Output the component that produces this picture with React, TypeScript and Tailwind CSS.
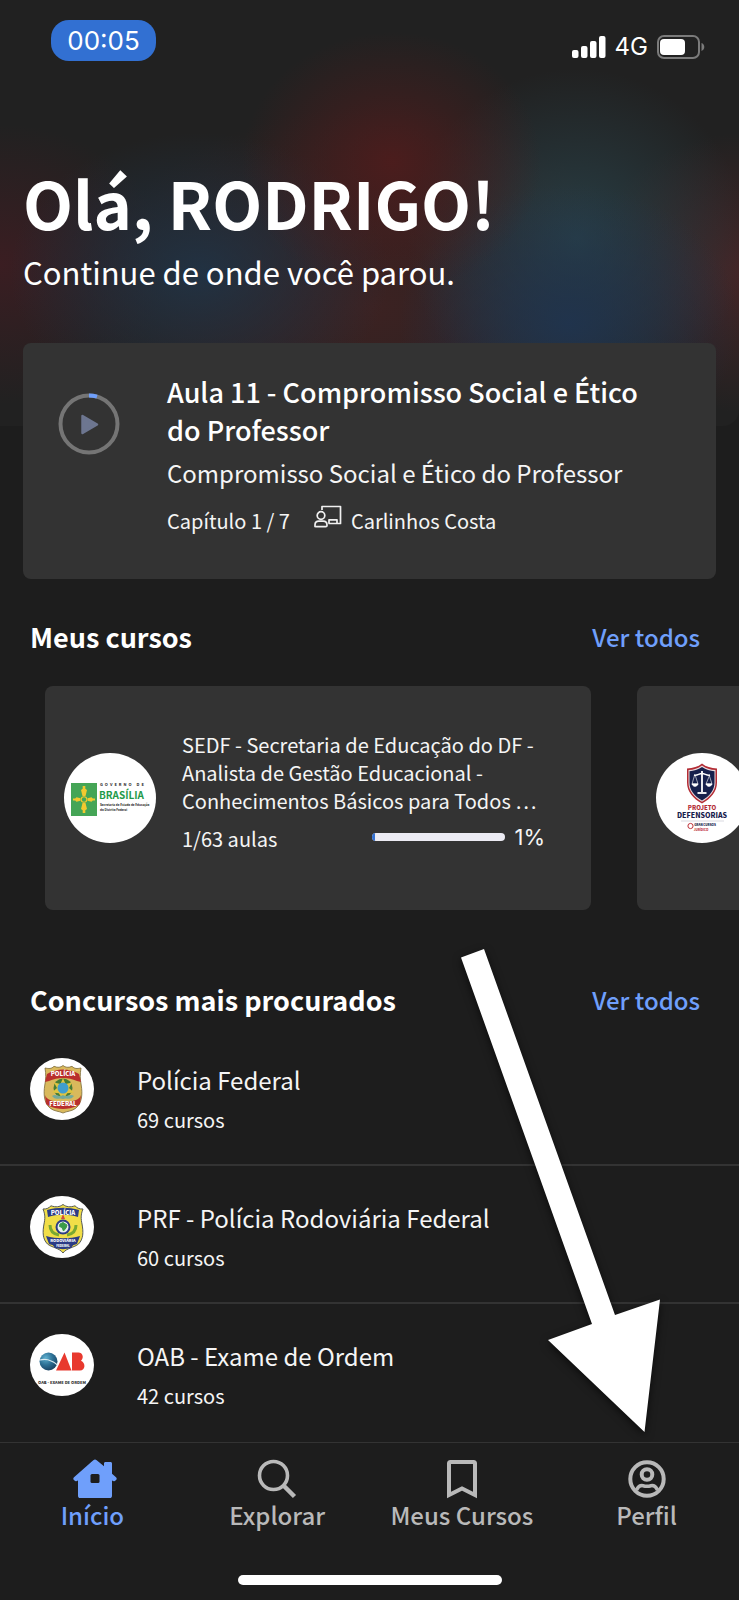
import type { ReactNode } from 'react';

type TabItem = {
  label: string;
  icon: ReactNode;
  active?: boolean;
};

type Contest = {
  name: string;
  courses: number;
  logo: ReactNode;
};

function SignalIcon() {
  return (
    <svg width="34" height="22" viewBox="0 0 34 22" fill="#fff" aria-hidden="true">
      <rect x="0" y="14" width="6.500" height="8" rx="2" />
      <rect x="9" y="10" width="6.500" height="12" rx="2" />
      <rect x="18" y="5" width="6.500" height="17" rx="2" />
      <rect x="27" y="0" width="6.500" height="22" rx="2" />
    </svg>
  );
}

function BatteryIcon() {
  return (
    <svg width="48" height="24" viewBox="0 0 48 24" aria-hidden="true">
      <rect x="1" y="1" width="41" height="22" rx="6" fill="none" stroke="#7b7b7b" strokeWidth="2" />
      <rect x="3" y="4" width="25" height="16" rx="4" fill="#fff" />
      <path d="M44.500 8c1.700.6 2.800 2.200 2.800 4s-1.100 3.400-2.800 4z" fill="#7b7b7b" />
    </svg>
  );
}

function PlayProgress() {
  return (
    <svg width="62" height="62" viewBox="0 0 62 62" aria-hidden="true">
      <circle cx="31" cy="31" r="28.500" fill="none" stroke="#757575" strokeWidth="4" />
      <path d="M31 2.500a28.500 28.500 0 0 1 8 1.150" fill="none" stroke="#6f9ffb" strokeWidth="4" />
      <path d="M24.500 23v17L39 31.500z" fill="#6d7690" stroke="#6d7690" strokeWidth="2.500" strokeLinejoin="round" />
    </svg>
  );
}

function TeacherIcon() {
  return (
    <svg
      width="28"
      height="24"
      viewBox="0 0 28 24"
      fill="none"
      stroke="#f0f0f0"
      strokeWidth="1.700"
      strokeLinejoin="round"
      aria-hidden="true"
    >
      <path d="M8 5V1.500h18.500v17H14.500" />
      <circle cx="7" cy="10.500" r="3.800" />
      <path d="M1 21.500V20c0-2.200 1.600-3.800 3.800-3.800h4.400c2.200 0 3.800 1.600 3.800 3.800v.5c0 .8-.5 1.200-1.200 1.200H2c-.6 0-1-.3-1-.8z" />
      <path d="M15 18.500v-3.700h8v3.700" />
    </svg>
  );
}

function HomeIcon() {
  return (
    <svg width="50" height="40" viewBox="-6 0 50 40" aria-hidden="true">
      <path
        d="M20.300 1.200a2.600 2.600 0 0 1 3.400 0L31 7.300V4.500C31 3.600 31.600 3 32.500 3h5c.9 0 1.500.6 1.500 1.500v10.200l4 3.600c.9.800.9 1.700.3 2.400l-.8.900c-.6.700-1.500.8-2.300.4l-1.200-.4v15.100c0 1.500-.8 2.300-2.300 2.300H7.300C5.800 39 5 38.200 5 36.700V21.600l-1.200.4c-.8.400-1.700.3-2.300-.4l-.8-.9c-.6-.7-.6-1.600.3-2.400z"
        fill="#6f9ffb"
      />
      <rect x="17.500" y="15" width="9" height="9" rx="1.500" fill="#1d1d1d" />
    </svg>
  );
}

function SearchIcon() {
  return (
    <svg width="40" height="40" viewBox="0 0 40 40" fill="none" stroke="currentColor" strokeWidth="3.600" aria-hidden="true">
      <circle cx="16.500" cy="16.500" r="14" />
      <path d="M26.500 26.500l11 11" strokeWidth="4.500" />
    </svg>
  );
}

function BookmarkIcon() {
  return (
    <svg width="32" height="40" viewBox="0 0 32 40" fill="none" stroke="currentColor" strokeWidth="4" aria-hidden="true">
      <path d="M3 36V4.500C3 3.500 3.500 3 4.500 3h23c1 0 1.500.5 1.500 1.500V36l-13-6.500z" />
    </svg>
  );
}

function ProfileIcon() {
  return (
    <svg width="40" height="40" viewBox="0 0 40 40" fill="none" stroke="currentColor" strokeWidth="4" aria-hidden="true">
      <circle cx="20" cy="20" r="16.700" />
      <circle cx="20" cy="15.500" r="5.300" />
      <path d="M9.500 31c1.500-3 4-4.800 6.500-4.300 2.800.8 5.200.8 8 0 2.500-.5 5 1.300 6.500 4.300" strokeWidth="3.500" />
    </svg>
  );
}

function BrasiliaLogo() {
  return (
    <svg className="shrink-0" width="92" height="90" viewBox="0 0 92 90" role="img" aria-label="Governo de Brasília">
      <ellipse cx="46" cy="45" rx="46" ry="45" fill="#fff" />
      <rect x="7" y="30" width="26" height="33" fill="#45a556" />
      <g fill="#f3c92f">
        <path d="M18.500 43l-1.500-6 1.700-1.300V33h2.600v2.700L23 37l-1.500 6z" />
        <path d="M18.500 50l-1.500 6 1.700 1.300V60h2.600v-2.700L23 56l-1.500-6z" />
        <path d="M16.500 45.300l-4-1-1.300 1.200H9v2h2.200l1.300 1.200 4-1z" />
        <path d="M23.500 45.300l4-1 1.300 1.200H31v2h-2.200l-1.300 1.200-4-1z" />
        <circle cx="20" cy="46.500" r="3.300" />
      </g>
      <circle cx="20" cy="46.500" r="2.200" fill="#45a556" />
      <g fontFamily="'Noto Sans CJK KR', sans-serif" fontWeight="700">
        <text x="36" y="33" fontSize="4" letterSpacing="2" fill="#222">GOVERNO DE</text>
        <text x="35" y="46" fontSize="10" fill="#1f9a49">BRASÍLIA</text>
      </g>
      <g fontFamily="'Noto Sans CJK KR', sans-serif" fontWeight="700" fontSize="3" fill="#222">
        <text x="36" y="53">Secretaria de Estado de Educação</text>
        <text x="36" y="58">do Distrito Federal</text>
      </g>
    </svg>
  );
}

function DefensoriasLogo() {
  return (
    <svg className="shrink-0" width="92" height="90" viewBox="0 0 92 90" role="img" aria-label="Projeto Defensorias">
      <ellipse cx="46" cy="45" rx="46" ry="45" fill="#fff" />
      <path d="M46 10.500c4 3.300 9 4.700 15 5v14c0 9-6 16-15 21-9-5-15-12-15-21v-14c6-.3 11-1.700 15-5z" fill="#b32d35" />
      <path d="M46 12.500c4 3 8.500 4.300 13.500 4.600v12.600c0 8-5.500 14.400-13.500 19-8-4.600-13.500-11-13.500-19V17.100c5-.3 9.500-1.600 13.500-4.600z" fill="#e9dadd" />
      <path d="M46 14c4 2.700 8 3.900 12.500 4.200v11.500c0 7.500-5 13.500-12.500 17.800-7.500-4.300-12.500-10.300-12.500-17.800V18.200C38 17.900 42 16.700 46 14z" fill="#16204c" />
      <g fill="none" stroke="#fff" strokeWidth="1">
        <path d="M46 18v21" strokeWidth="1.800" />
        <path d="M38 22c3 1 5-1.500 8-1.500s5 2.500 8 1.500" strokeWidth="1.500" />
        <path d="M41.500 40h9" strokeWidth="1.800" />
        <path d="M38.500 22.500L36 31h6l-2.700-8.500M53.500 22.500L50 31h6l-2.700-8.500" strokeWidth=".600" />
        <path d="M36 31c1 3 5 3 6 0zM50 31c1 3 5 3 6 0z" fill="#fff" />
      </g>
      <g fontFamily="'Noto Sans CJK KR', sans-serif" fontWeight="900" textAnchor="middle">
        <text x="46" y="57" fontSize="6" fill="#b32d35">PROJETO</text>
        <text x="46" y="65" fontSize="7" fill="#16204c">DEFENSORIAS</text>
        <text x="49" y="73" fontSize="3" fill="#16204c">GRAN CURSOS</text>
        <text x="45" y="78" fontSize="3" fill="#c0343c">JURÍDICO</text>
      </g>
      <path d="M25 68h43" stroke="#c9c9d3" strokeWidth=".700" />
      <circle cx="34.500" cy="73" r="2.600" fill="none" stroke="#c0343c" />
    </svg>
  );
}

function PoliciaFederalLogo() {
  return (
    <svg className="shrink-0" width="64" height="62" viewBox="0 0 64 62" role="img" aria-label="Polícia Federal">
      <ellipse cx="32" cy="31" rx="32" ry="31" fill="#fff" />
      <path
        d="M33 7.500c2.500 2 5 2.500 9 .8 2.500 2.600 5 2.500 9 1.700-1 6-1 11 .2 17 1.500 9 .8 18-5.200 23-4 3.500-9 3-13 5-4-2-9-1.500-13-5-6-5-6.700-14-5.200-23 1.200-6 1.200-11 .2-17 4 .8 6.500.9 9-1.700 4 1.700 6.500 1.200 9-.8z"
        fill="#d9b95c"
        stroke="#7a6a3a"
        strokeWidth=".800"
      />
      <path d="M17 16c10-6 22-6 32 0l2 8-4-1c-9-4-19-4-28 0l-4 1z" fill="#b92f2c" />
      <path d="M15 37c1 3 3 4 5 5 8 3 18 3 26 0 2-1 4-2 5-5l-1 9-3 2c-9 4-19 4-28 0l-3-2z" fill="#b92f2c" />
      <circle cx="33" cy="30" r="9.500" fill="#467c36" />
      <path d="M33 20l2.500 6 6.500-1.500-3 5.500 5 4.500-6.800.8L33 42l-4.200-6.700-6.800-.8 5-4.500-3-5.500 6.500 1.500z" fill="#dfc440" />
      <circle cx="33" cy="30" r="5.500" fill="#3f9ed0" />
      <path d="M22 38c4-3 7 2 11-1 4 3 7-2 11 1-4 5-7 1-11 3-4-2-7 2-11-3z" fill="#74aa9b" />
      <g fontFamily="'Noto Sans CJK KR', sans-serif" fontWeight="900" fontSize="6" textAnchor="middle" fill="#fff">
        <text x="33" y="18">POLÍCIA</text>
        <text x="33" y="48">FEDERAL</text>
      </g>
    </svg>
  );
}

function PrfLogo() {
  return (
    <svg className="shrink-0" width="64" height="62" viewBox="0 0 64 62" role="img" aria-label="Polícia Rodoviária Federal">
      <ellipse cx="32" cy="31" rx="32" ry="31" fill="#fff" />
      <path
        d="M33 8.500c3.500 2.500 7 3 12 1.300 2 2 4 3.500 8 3.200-2.500 6-2 10-1 15 1.500 8 1.500 15-3.500 20-4 3.500-12 4-15.500 9-3.500-5-11.500-5.500-15.500-9-5-5-5-12-3.500-20 1-5 1.500-9-1-15 4 .3 6-1.200 8-3.200 5 1.700 8.500 1.200 12-1.300z"
        fill="#f1de48"
        stroke="#555a58"
        strokeWidth="1"
      />
      <path d="M17 14c10-3 22-3 32 0l-1 7c-9-3-21-3-30 0z" fill="#2c3c85" />
      <path d="M16 40c10 3 24 3 34 0l-3 8c-8 3-20 3-28 0z" fill="#2c3c85" />
      <path d="M22 48c7 2.500 15 2.500 22 0l-3 4c-5 1.500-11 1.500-16 0z" fill="#2c3c85" />
      <path d="M20 29c0 5 3 9 9 10M46 29c0 5-3 9-9 10" fill="none" stroke="#79a832" strokeWidth="3" />
      <path d="M33 18l2 5h-4z" fill="#d44b3b" />
      <circle cx="33" cy="31" r="7.500" fill="#2c3c85" />
      <circle cx="33" cy="31" r="5.500" fill="#e8f1ef" />
      <path d="M30 28l3-1.500 4 2.500-1 3-2.500 3-1.500-3.500-2.500-1z" fill="#3a9c48" stroke="#3a9c48" />
      <g fontFamily="'Noto Sans CJK KR', sans-serif" fontWeight="900" textAnchor="middle" fill="#fff">
        <text x="33" y="19" fontSize="6">POLÍCIA</text>
        <text x="33" y="46" fontSize="4">RODOVIÁRIA</text>
        <text x="33" y="51" fontSize="3">FEDERAL</text>
      </g>
    </svg>
  );
}

function OabLogo() {
  return (
    <svg className="shrink-0" width="64" height="62" viewBox="0 0 64 62" role="img" aria-label="OAB">
      <defs>
        <radialGradient id="oab-globe" cx=".35" cy=".3" r=".8">
          <stop offset="0" stopColor="#5fb0cf" />
          <stop offset=".5" stopColor="#2c6f94" />
          <stop offset="1" stopColor="#173a59" />
        </radialGradient>
      </defs>
      <ellipse cx="32" cy="31" rx="32" ry="31" fill="#fff" />
      <circle cx="18.500" cy="27.500" r="9" fill="url(#oab-globe)" />
      <path d="M10 26c5-1.500 12 0 17.500 5" fill="none" stroke="#dcecf2" strokeWidth="1.200" />
      <path d="M34.500 18.500l7 18H26z" fill="#e8392e" />
      <path d="M42 18.500h6.500c4 0 6 5 2.500 8.200 5 2 4.500 9.800-1 9.800H42z" fill="#e8392e" />
      <text
        x="32"
        y="50"
        fontFamily="'Noto Sans CJK KR', sans-serif"
        fontWeight="900"
        fontSize="4"
        textAnchor="middle"
        fill="#333"
      >
        OAB - EXAME DE ORDEM
      </text>
    </svg>
  );
}

const CONTESTS: Contest[] = [
  { name: 'Polícia Federal', courses: 69, logo: <PoliciaFederalLogo /> },
  { name: 'PRF - Polícia Rodoviária Federal', courses: 60, logo: <PrfLogo /> },
  { name: 'OAB - Exame de Ordem', courses: 42, logo: <OabLogo /> },
];

const TABS: TabItem[] = [
  { label: 'Início', icon: <HomeIcon />, active: true },
  { label: 'Explorar', icon: <SearchIcon /> },
  { label: 'Meus Cursos', icon: <BookmarkIcon /> },
  { label: 'Perfil', icon: <ProfileIcon /> },
];

function StatusBar() {
  return (
    <div className="flex items-start justify-between pt-5 pr-[34px] pl-[51px] font-[Inter,sans-serif] text-white">
      <span className="flex h-[41px] w-[105px] items-center justify-center rounded-[18px] bg-[#3270d2] text-[26px]">
        00:05
      </span>
      <div className="flex h-[54px] items-center gap-[9px] text-[24px]">
        <SignalIcon />
        <span>4G</span>
        <BatteryIcon />
      </div>
    </div>
  );
}

function SectionHeader({ title }: { title: string }) {
  return (
    <div className="flex items-center justify-between pr-[39px] pl-[30px] leading-10">
      <h2 className="text-[27px] font-bold text-white">{title}</h2>
      <a href="#" className="text-[24px] font-medium text-[#6f9ffb]">
        Ver todos
      </a>
    </div>
  );
}

export default function App() {
  return (
    <div className="relative flex min-h-screen flex-col overflow-hidden bg-[#1d1d1d] font-['Noto_Sans_CJK_KR',sans-serif] text-[#f5f5f5]">
      {/* Blurred hero background */}
      <div className="absolute inset-x-0 top-0 h-[426px] rounded-br-2xl bg-[#212121] bg-[radial-gradient(ellipse_150px_130px_at_53%_38%,#501c1ce0,#501c1c70_50%,transparent),radial-gradient(ellipse_170px_140px_at_77%_76%,#1f3450e0,#1f345070_50%,transparent),radial-gradient(ellipse_170px_170px_at_78%_56%,#29424ae0,#29424a70_50%,transparent),radial-gradient(ellipse_190px_140px_at_27%_64%,#203447e0,#20344770_50%,transparent),radial-gradient(ellipse_160px_140px_at_101%_64%,#4a2628e0,#4a262870_50%,transparent),radial-gradient(ellipse_170px_140px_at_0%_62%,#3e1d22e0,#3e1d2270_50%,transparent),radial-gradient(ellipse_280px_200px_at_50%_72%,#402222e0,#40222270_50%,transparent)]" />

      <div className="relative flex grow flex-col">
        <StatusBar />

        <header className="px-[23px] pt-[88px] text-white">
          <h1 className="text-[65px] leading-[80px] font-bold">Olá, RODRIGO!</h1>
          <p className="mt-[6px] text-[31px] leading-[48px]">Continue de onde você parou.</p>
        </header>

        <main>
          {/* Last lesson */}
          <article className="mx-[23px] mt-[47px] flex rounded-lg bg-[#333] pt-[30px] pr-12 pb-10 pl-[35px]">
            <button type="button" aria-label="Continuar aula" className="mt-5 h-[62px] shrink-0">
              <PlayProgress />
            </button>
            <div className="ml-[47px] min-w-0">
              <h2 className="text-[27px] leading-[38px] font-medium text-white">
                Aula 11 - Compromisso Social e Ético do Professor
              </h2>
              <p className="mt-1 text-[24px] leading-10">Compromisso Social e Ético do Professor</p>
              <div className="mt-[10px] flex items-center text-[20px] leading-9">
                <span>Capítulo 1 / 7</span>
                <span className="mr-[9px] mb-2 ml-6">
                  <TeacherIcon />
                </span>
                <span>Carlinhos Costa</span>
              </div>
            </div>
          </article>

          <section className="pt-[38px]">
            <SectionHeader title="Meus cursos" />
            <div className="mt-[29px] flex gap-[46px] overflow-hidden pl-[45px]">
              <article className="flex h-[224px] w-[546px] shrink-0 items-center rounded-lg bg-[#333] pr-[46px] pl-[19px]">
                <BrasiliaLogo />
                <div className="ml-[26px] min-w-0 grow pb-[6px] text-[20px]">
                  <h3 className="leading-7">
                    SEDF - Secretaria de Educação do DF - Analista de Gestão Educacional - Conhecimentos Básicos para Todos …
                  </h3>
                  <div className="mt-1 flex items-center leading-9">
                    <span className="grow">1/63 aulas</span>
                    <div className="flex items-center pb-1">
                      <div className="h-2 w-[133px] overflow-hidden rounded-full bg-[#ecebf3]">
                        <div className="h-full min-w-[3px] bg-[#3270d2]" style={{ width: '1%' }} />
                      </div>
                      <span className="w-10 text-right font-[Inter,sans-serif] text-[22px]">1%</span>
                    </div>
                  </div>
                </div>
              </article>
              <article className="flex h-[224px] w-[546px] shrink-0 items-center rounded-lg bg-[#333] pl-[19px]">
                <DefensoriasLogo />
              </article>
            </div>
          </section>

          <section className="pt-[70px]">
            <SectionHeader title="Concursos mais procurados" />
            <ul className="mt-2 divide-y-2 divide-[#333]">
              {CONTESTS.map((c) => (
                <li key={c.name}>
                  <a href="#" className="flex h-[136px] items-start pt-[30px] pl-[30px]">
                    {c.logo}
                    <span className="ml-[43px] flex flex-col gap-[6px] pt-1">
                      <span className="text-[24px] leading-9">{c.name}</span>
                      <span className="text-[20px] leading-8">{c.courses} cursos</span>
                    </span>
                  </a>
                </li>
              ))}
            </ul>
          </section>
        </main>

        {/* Tab bar */}
        <nav className="mt-auto border-t border-[#333] bg-[#1d1d1d]">
          <div className="grid grid-cols-4 pt-4">
            {TABS.map((tab) => (
              <a
                key={tab.label}
                href="#"
                className={
                  tab.active
                    ? 'flex flex-col items-center text-[24px] leading-8 font-medium text-[#6f9ffb]'
                    : 'flex flex-col items-center text-[24px] leading-8 font-medium text-[#b9b9b9]'
                }
              >
                {tab.icon}
                {tab.label}
              </a>
            ))}
          </div>
          <div className="mx-auto mt-[44px] mb-[15px] h-[10px] w-[264px] rounded-full bg-white" />
        </nav>
      </div>

      {/* Arrow pointing at the profile tab */}
      <svg
        className="pointer-events-none absolute right-[79px] bottom-[168px] overflow-visible drop-shadow-[0_3px_4px_rgba(0,0,0,0.6)]"
        width="112"
        height="483"
        viewBox="0 0 112 483"
        aria-hidden="true"
      >
        <path d="M-87 8.500L-64 0l131 366 45-15.500L96.500 483 0 391l44-16z" fill="#fff" />
      </svg>
    </div>
  );
}
